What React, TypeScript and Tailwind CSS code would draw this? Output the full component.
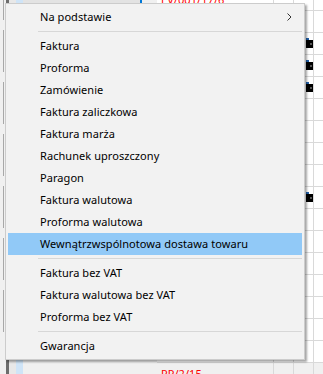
import React from "react";

type Entry = { type: "item"; label: string; sub?: boolean; active?: boolean } | { type: "sep" };

const entries: Entry[] = [
  { type: "item", label: "Na podstawie", sub: true },
  { type: "sep" },
  { type: "item", label: "Faktura" },
  { type: "item", label: "Proforma" },
  { type: "item", label: "Zamówienie" },
  { type: "item", label: "Faktura zaliczkowa" },
  { type: "item", label: "Faktura marża" },
  { type: "item", label: "Rachunek uproszczony" },
  { type: "item", label: "Paragon" },
  { type: "item", label: "Faktura walutowa" },
  { type: "item", label: "Proforma walutowa" },
  { type: "item", label: "Wewnątrzwspólnotowa dostawa towaru", active: true },
  { type: "sep" },
  { type: "item", label: "Faktura bez VAT" },
  { type: "item", label: "Faktura walutowa bez VAT" },
  { type: "item", label: "Proforma bez VAT" },
  { type: "sep" },
  { type: "item", label: "Gwarancja" },
];

const rows: { text?: string; icon?: boolean }[] = [
  { text: "EV/001/17/6" },
  {},
  { icon: true },
  { icon: true },
  { icon: true },
  {},
  {},
  {},
  {},
  { icon: true },
  {},
  {},
  {},
  {},
  {},
  {},
  {},
  { text: "PP/2/15" },
];

function Printer() {
  return (
    <svg width="12" height="11" viewBox="0 0 12 11">
      <rect x="5" y="0" width="3" height="2" fill="#1f5fa8" />
      <rect x="5" y="2" width="7" height="8" fill="#000" />
      <rect x="9" y="5" width="2" height="2" fill="#555" />
    </svg>
  );
}

export default function App() {
  return (
    <div
      className="relative w-[323px] h-[374px] overflow-hidden bg-[#f0f0f0] flex"
      style={{ fontFamily: '"Segoe UI", "Noto Sans", sans-serif' }}
    >
      {/* left app strip */}
      <div className="flex w-[157px] h-full">
        <div className="w-[6px] h-full flex flex-col gap-[10px]">
          {[0, 1, 2, 3, 4, 5, 6].map((i) => (
            <div key={i} className="w-[4px] h-[42px] border-r border-[#a8a8a8] first:h-[20px]" />
          ))}
        </div>
        <div className="w-[3px] h-full bg-[#6d6d6d]" />
        <div className="w-[7px] h-full bg-[#e8e8e8]" />
        <div className="w-[7px] h-full bg-[#cfe4f7]" />
        <div className="flex-1 h-full flex flex-col">
          <div className="h-[3px] flex">
            <div className="w-[119px] h-full bg-[#e3e3e3] border-r-2 border-[#0078d7]" />
          </div>
          <div className="flex-1 bg-[#f0f0f0]" />
        </div>
      </div>
      {/* table */}
      <div className="flex-1 h-full bg-white flex flex-col mt-[-11px]">
        {rows.map((r, i) => (
          <div key={i} className="h-[22px] shrink-0 flex border-b border-[#d9d9d9]">
            <div className="w-[117px] border-r border-[#d9d9d9] pl-[4px] flex items-center text-[11px] tracking-[0.06px] text-[#ff0000] leading-none">
              {r.text}
            </div>
            <div className="w-[20px] border-r border-[#d9d9d9]" />
            <div className="w-[20px] border-r border-[#d9d9d9] flex items-center justify-end">
              {r.icon ? <Printer /> : null}
            </div>
            <div className="flex-1" />
          </div>
        ))}
      </div>

      {/* context menu */}
      <div className="absolute left-[5px] top-[3px] w-[300px] bg-[#f2f2f2] border border-[#cccccc] shadow-[2px_2px_2px_rgba(0,0,0,0.35)] py-[2px] px-[2px] text-[11px] tracking-[0.06px] text-black">
        {entries.map((e, i) =>
          e.type === "sep" ? (
            <div key={i} className="h-[7px] pt-[3px] pl-[30px]">
              <div className="h-px bg-[#d7d7d7]" />
            </div>
          ) : (
            <div
              key={i}
              className={
                "h-[22px] flex items-center pl-[32px] pr-[10px] justify-between " +
                (e.active ? "bg-[#91c9f7]" : "")
              }
            >
              <span>{e.label}</span>
              {e.sub ? (
                <svg width="5" height="8" viewBox="0 0 5 8">
                  <polyline points="0.5,0.5 4,4 0.5,7.5" fill="none" stroke="#333" strokeWidth="1" />
                </svg>
              ) : null}
            </div>
          )
        )}
      </div>
    </div>
  );
}
